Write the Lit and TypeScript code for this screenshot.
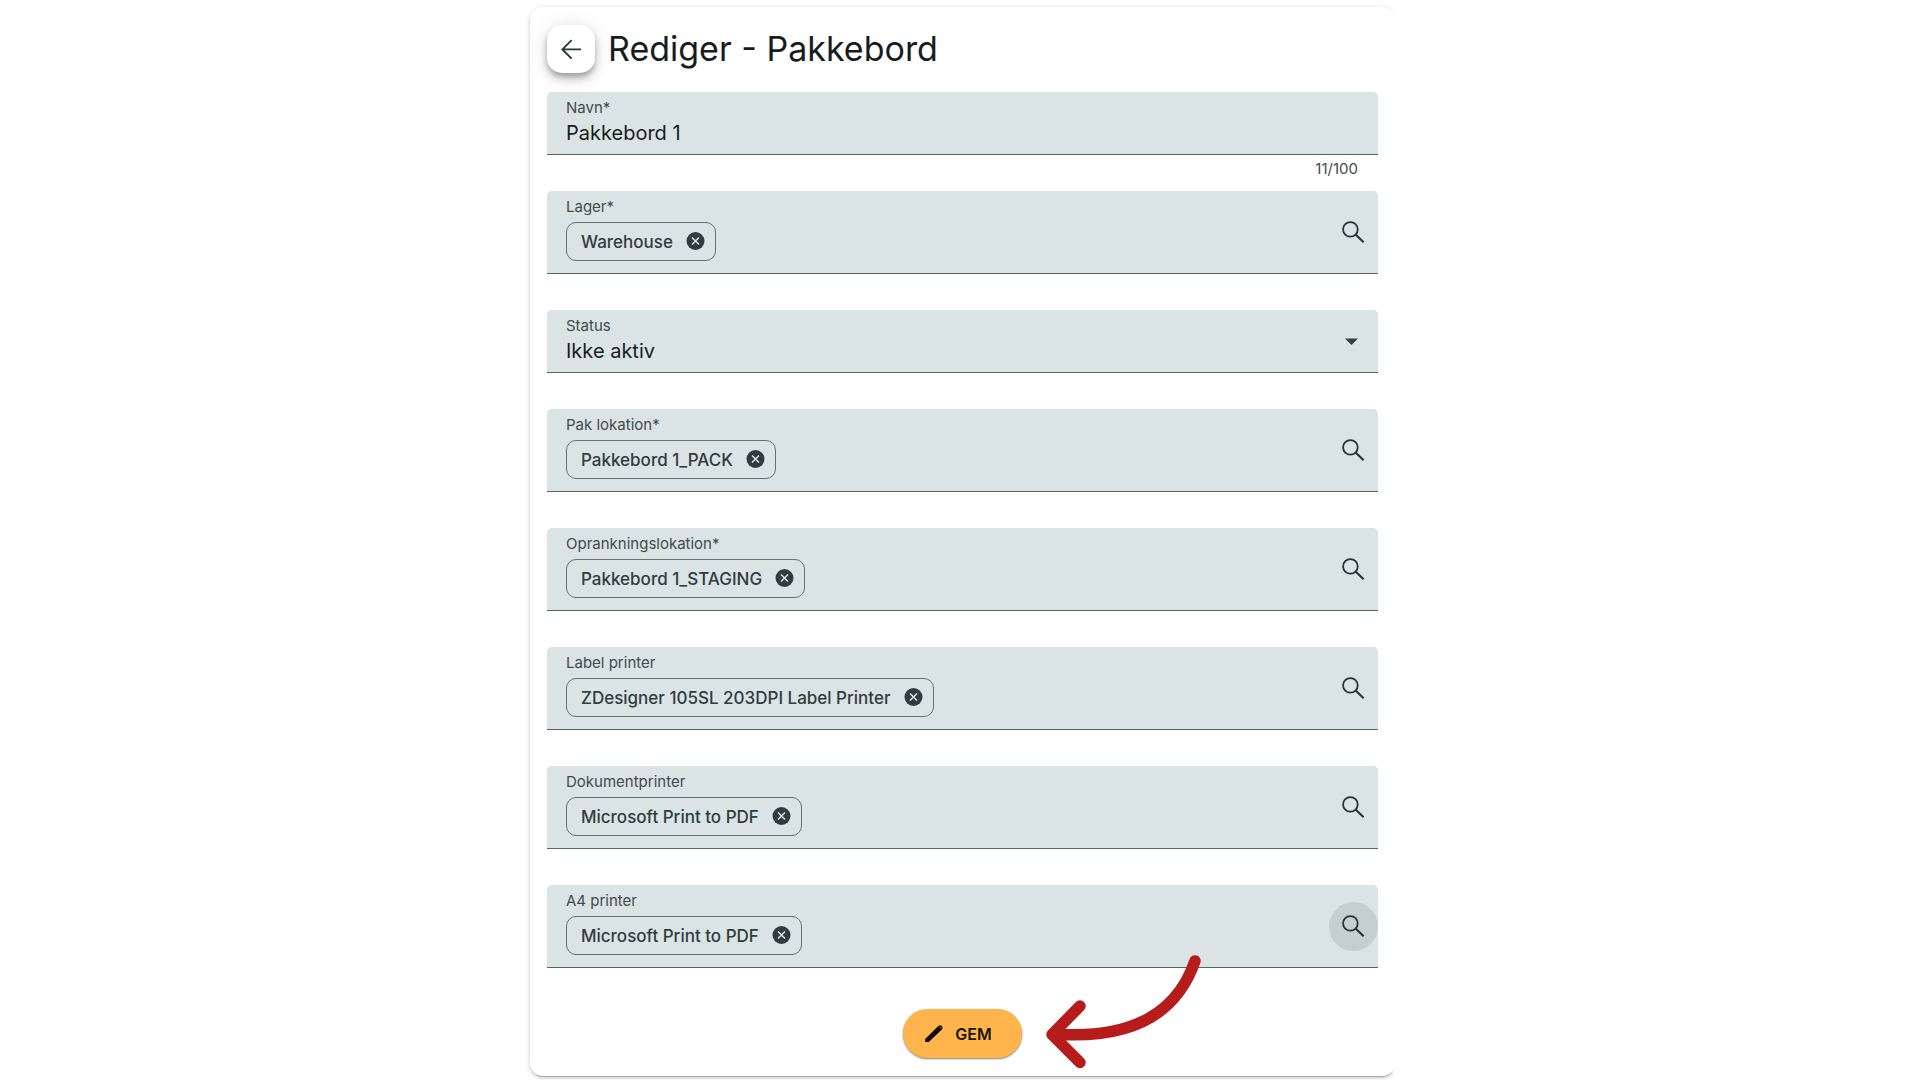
import { LitElement, html, css } from "lit";
import { customElement, property, state } from "lit/decorators.js";

const searchIcon = html`<svg class="icon" viewBox="0 0 30 30" aria-hidden="true">
  <circle cx="11.4" cy="12.4" r="7.3" fill="none" stroke="currentColor" stroke-width="1.8"></circle>
  <path d="M16.6 17.6 24.6 25.2" fill="none" stroke="currentColor" stroke-width="2.1"></path>
</svg>`;

const closeIcon = html`<svg class="close" viewBox="0 0 19 19" aria-hidden="true">
  <circle cx="9.5" cy="9" r="9" fill="currentColor"></circle>
  <path d="M6 5.5 13 12.5M13 5.5 6 12.5" fill="none" stroke="#dae4e4" stroke-width="1.5"></path>
</svg>`;

const shared = css`
  * {
    box-sizing: border-box;
  }
  button,
  input,
  select {
    font: inherit;
    color: inherit;
    margin: 0;
    padding: 0;
    border: 0;
    background: none;
    outline: none;
  }
  button {
    cursor: pointer;
  }
  .box {
    display: flex;
    align-items: center;
    background: #dae4e4;
    border-bottom: 1px solid #57666a;
    border-radius: 5px 5px 0 0;
    padding-left: 19px;
  }
  .body {
    display: flex;
    flex-direction: column;
    flex: 1;
    min-width: 0;
  }
  .label {
    font-size: 15px;
    line-height: 20px;
    color: #414b4d;
  }
  .value {
    width: 100%;
    height: 28px;
    font-size: 20px;
    line-height: 28px;
    color: #171d1e;
  }
  .short {
    height: 63px;
    padding-right: 20px;
  }
  .short .body {
    gap: 1px;
    padding-bottom: 1px;
  }
  .hint {
    height: 36px;
    padding: 4px 20px 0;
    font-size: 15px;
    line-height: 20px;
    text-align: right;
    color: #414b4d;
  }
`;

@customElement("text-field")
class TextField extends LitElement {
  static styles = [
    shared,
    css`
      :host {
        display: block;
      }
    `,
  ];
  @property() label = "";
  @property() value = "";
  @property() counter = "";

  render() {
    return html`<div class="box short">
        <div class="body">
          <label class="label" for="control">${this.label}</label>
          <input class="value" id="control" type="text" maxlength="100" .value=${this.value} />
        </div>
      </div>
      <div class="hint">${this.counter}</div>`;
  }
}

@customElement("select-field")
class SelectField extends LitElement {
  static styles = [
    shared,
    css`
      :host {
        display: block;
      }
      .value {
        appearance: none;
      }
      .caret {
        width: 13px;
        height: 7px;
        color: #343f41;
      }
    `,
  ];
  @property() label = "";
  @property({ attribute: false }) options: string[] = [];

  render() {
    return html`<div class="box short">
        <div class="body">
          <label class="label" for="control">${this.label}</label>
          <select class="value" id="control">
            ${this.options.map((o) => html`<option>${o}</option>`)}
          </select>
        </div>
        <svg class="caret" viewBox="0 0 13 7" aria-hidden="true">
          <path d="M0 0.5H13L6.5 7Z" fill="currentColor"></path>
        </svg>
      </div>
      <div class="hint"></div>`;
  }
}

@customElement("chip-field")
class ChipField extends LitElement {
  static styles = [
    shared,
    css`
      :host {
        display: block;
      }
      .tall {
        height: 83px;
      }
      .tall .body {
        gap: 5px;
        padding-bottom: 6px;
      }
      .chips {
        display: flex;
        align-items: center;
      }
      .chip {
        display: flex;
        align-items: center;
        gap: 13px;
        height: 39px;
        padding: 0 10px 0 14px;
        border: 1px solid #637174;
        border-radius: 10px;
        font-size: 17px;
        font-weight: 500;
        line-height: 24px;
        white-space: nowrap;
        color: #303c3e;
      }
      .remove {
        display: flex;
      }
      .close {
        width: 19px;
        height: 19px;
      }
      .entry {
        flex: 1;
        min-width: 0;
      }
      .search {
        display: flex;
        align-items: center;
        justify-content: center;
        width: 49px;
        height: 49px;
        border-radius: 50%;
        color: #263234;
      }
      .search.active {
        background: #c6cfcf;
      }
      .icon {
        width: 30px;
        height: 30px;
      }
    `,
  ];
  @property() label = "";
  @property() value = "";
  @property({ type: Boolean }) active = false;

  render() {
    return html`<div class="box tall">
        <div class="body">
          <label class="label" for="control">${this.label}</label>
          <div class="chips">
            ${this.value
              ? html`<span class="chip"
                  >${this.value}<button
                    class="remove"
                    type="button"
                    aria-label="Fjern"
                    @click=${() => (this.value = "")}
                  >
                    ${closeIcon}
                  </button></span
                >`
              : ""}
            <input class="entry" id="control" type="text" />
          </div>
        </div>
        <button class="search ${this.active ? "active" : ""}" type="button" aria-label="Søg">
          ${searchIcon}
        </button>
      </div>
      <div class="hint"></div>`;
  }
}

@customElement("app-root")
class AppRoot extends LitElement {
  static styles = [
    shared,
    css`
      :host {
        display: block;
        min-height: 100vh;
        background: #fff;
        font-family: Inter, "Liberation Sans", sans-serif;
      }
      .frame {
        max-width: 866px;
        margin: 0 auto;
        padding: 7px 0 4px 3px;
        overflow: hidden;
      }
      .card {
        margin-right: -2px;
        padding: 18px 17px;
        border-radius: 13px;
        background: #fff;
        box-shadow: 0 3px 1px -2px rgba(0, 0, 0, 0.2), 0 2px 3px 0 rgba(0, 0, 0, 0.14),
          0 1px 6px 0 rgba(0, 0, 0, 0.12);
      }
      .header {
        display: flex;
        align-items: center;
        gap: 13px;
        margin-bottom: 19px;
      }
      .back {
        display: flex;
        align-items: center;
        justify-content: center;
        width: 48px;
        height: 48px;
        border-radius: 15px;
        background: #fff;
        color: #24393c;
        box-shadow: 0 4px 6px -1px rgba(0, 0, 0, 0.3), 0 7px 12px 0 rgba(0, 0, 0, 0.12),
          0 1px 20px 0 rgba(0, 0, 0, 0.1);
      }
      .back svg {
        width: 30px;
        height: 30px;
      }
      .title {
        margin: 0;
        font-size: 34px;
        font-weight: 400;
        line-height: 44px;
        color: #171d1e;
      }
      .actions {
        display: flex;
        justify-content: center;
        padding-top: 5px;
      }
      .anchor {
        position: relative;
      }
      .save {
        display: flex;
        align-items: center;
        gap: 10px;
        height: 49px;
        padding: 0 30px 0 20px;
        border-radius: 25px;
        background: #ffb54c;
        color: #1a1405;
        font-size: 16px;
        font-weight: 600;
        line-height: 24px;
        box-shadow: 0 1px 2px rgba(0, 0, 0, 0.5);
      }
      .save svg {
        width: 22px;
        height: 22px;
      }
      .arrow {
        position: absolute;
        left: 139px;
        top: -59px;
        width: 164px;
        height: 124px;
        pointer-events: none;
      }
    `,
  ];

  @state() private fields = [
    { label: "Pak lokation*", value: "Pakkebord 1_PACK" },
    { label: "Oprankningslokation*", value: "Pakkebord 1_STAGING" },
    { label: "Label printer", value: "ZDesigner 105SL 203DPI Label Printer" },
    { label: "Dokumentprinter", value: "Microsoft Print to PDF" },
    { label: "A4 printer", value: "Microsoft Print to PDF", active: true },
  ];

  render() {
    return html`<main class="frame">
      <form class="card" @submit=${(e: Event) => e.preventDefault()}>
        <header class="header">
          <button class="back" type="button" aria-label="Tilbage">
            <svg viewBox="0 0 30 30" aria-hidden="true">
              <path
                d="M25 15.4H6.6M15.6 6.2 6.4 15.4 15.6 24.6"
                fill="none"
                stroke="currentColor"
                stroke-width="1.9"
              ></path>
            </svg>
          </button>
          <h1 class="title">Rediger - Pakkebord</h1>
        </header>
        <text-field label="Navn*" value="Pakkebord 1" counter="11/100"></text-field>
        <chip-field label="Lager*" value="Warehouse"></chip-field>
        <select-field label="Status" .options=${["Ikke aktiv", "Aktiv"]}></select-field>
        ${this.fields.map(
          (f) =>
            html`<chip-field .label=${f.label} .value=${f.value} .active=${!!f.active}></chip-field>`
        )}
        <div class="actions">
          <div class="anchor">
            <button class="save" type="submit">
              <svg viewBox="0 0 22 22" aria-hidden="true">
                <path
                  d="M2.2 16 14.8 3.4Q17 1.4 18.8 3 20.4 4.8 18.4 7L5.800 19H2.800Q2.200 19 2.200 18.400Z"
                  fill="#0d0a02"
                ></path>
                <path d="M16.2 3.6 18.2 5.6" stroke="#a87730" stroke-width="1"></path>
              </svg>
              GEM
            </button>
            <svg class="arrow" viewBox="0 0 164 124" aria-hidden="true">
              <path
                d="M153 11C132 72 78 89 12 84M38 56 10 84.5 38 112.5"
                fill="none"
                stroke="#b71c1c"
                stroke-width="11.5"
                stroke-linecap="round"
                stroke-linejoin="round"
              ></path>
            </svg>
          </div>
        </div>
      </form>
    </main>`;
  }
}
